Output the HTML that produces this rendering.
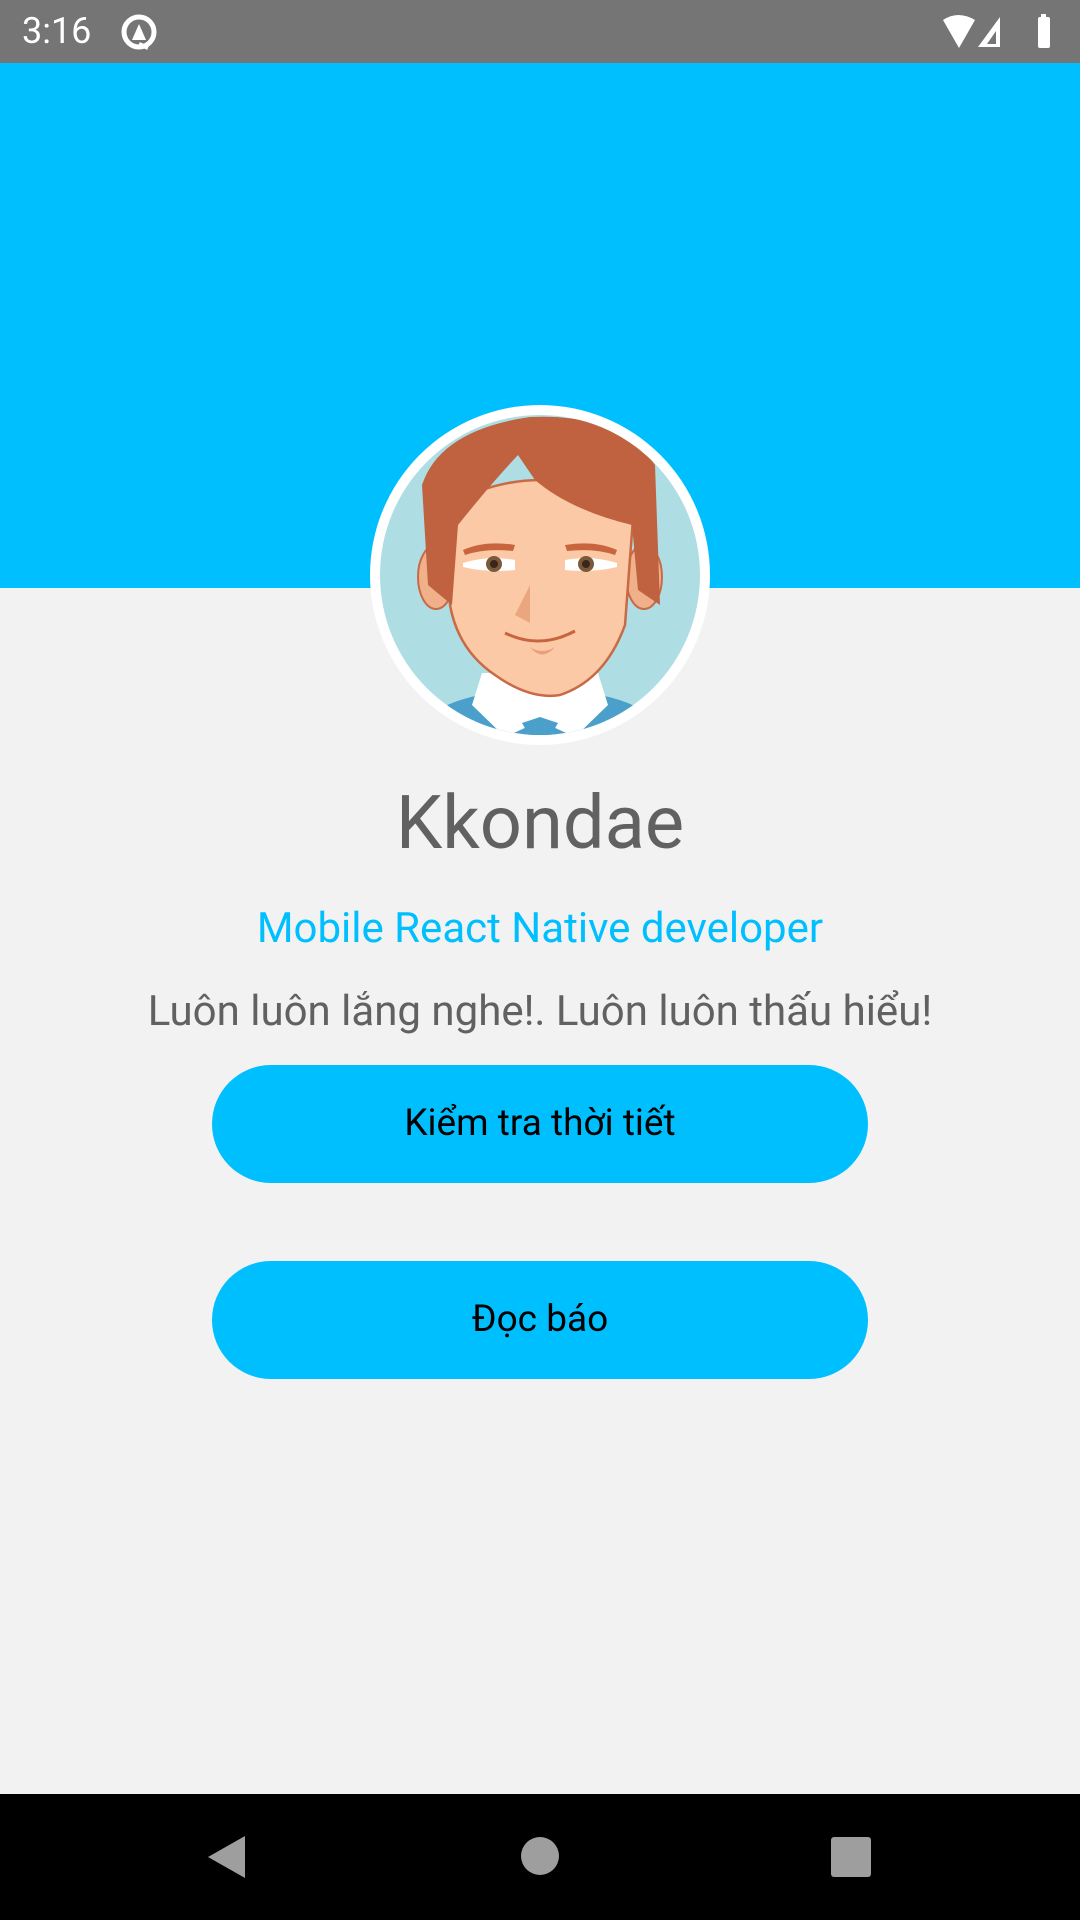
<!DOCTYPE html>
<html><head><meta charset="utf-8"><style>
*{margin:0;padding:0;box-sizing:border-box}
body{width:1080px;height:1920px;background:#f2f2f2;font-family:"Roboto","Liberation Sans","DejaVu Sans",sans-serif;position:relative;overflow:hidden}
.sb{position:absolute;left:0;top:0;width:1080px;height:63px;background:#757575;color:#fff}
.hdr{position:absolute;left:0;top:63px;width:1080px;height:525px;background:#00bfff}
.av{position:absolute;left:370px;top:405px;width:340px;height:340px}
.t{position:absolute;left:0;width:1080px;text-align:center}
.btn{position:absolute;left:212px;width:656px;height:118px;border-radius:59px;background:#00bfff;color:#000;font-size:37px;text-align:center;line-height:118px}
.nav{position:absolute;left:0;top:1794px;width:1080px;height:126px;background:#000}
</style></head><body>
<div class="sb">
<div style="position:absolute;left:22px;top:10px;font-size:36px">3:16</div>
<svg style="position:absolute;left:118px;top:12px" width="42" height="40" viewBox="0 0 42 40"><circle cx="21" cy="20" r="15" fill="none" stroke="#fff" stroke-width="5"/><path d="M14 28 L21 12 L28 28 Z" fill="#fff"/><path d="M21 32 L30 36" stroke="#fff" stroke-width="4"/></svg>
<svg style="position:absolute;left:940px;top:14px" width="125" height="36" viewBox="0 0 125 36"><path d="M3 6 Q18 -4 35 6 L19 34 Z" fill="#fff"/><path d="M38 33 L60 3 L60 33 Z" fill="#fff"/><path d="M47 30 L56 17 L56 30 Z" fill="#757575"/><rect x="101" y="0" width="5" height="4" fill="#fff"/><rect x="98" y="3" width="12" height="31" rx="2" fill="#fff"/></svg>
</div>
<div class="hdr"></div>
<svg class="av" viewBox="0 0 340 340">
<circle cx="170" cy="170" r="170" fill="#fff"/>
<clipPath id="c"><circle cx="170" cy="170" r="160"/></clipPath>
<g clip-path="url(#c)">
<rect width="340" height="340" fill="#aedde4"/>
<path d="M40 330 Q60 300 110 290 L230 290 Q280 300 300 330 L300 340 L40 340Z" fill="#4a9fcb"/>
<path d="M112 268 L228 268 L238 300 L205 332 L170 316 L135 332 L102 300Z" fill="#fff"/>
<path d="M152 318 L170 312 L188 318 L180 332 L160 332Z" fill="#4a9fcb"/>
<ellipse cx="66" cy="172" rx="18" ry="32" fill="#f0b08a" stroke="#c86a45" stroke-width="2"/>
<ellipse cx="274" cy="172" rx="18" ry="32" fill="#f0b08a" stroke="#c86a45" stroke-width="2"/>
<path d="M78 100 L80 200 Q88 245 125 270 Q160 295 190 290 Q235 275 255 220 L264 100 Q170 50 78 100Z" fill="#fbc9a5" stroke="#c86a45" stroke-width="2.5"/>
<path d="M52 80 Q70 25 160 12 Q250 8 285 60 L290 200 L268 185 L262 120 Q200 105 165 75 L148 50 Q120 80 88 120 L82 200 L58 180 Z" fill="#c0623f"/>
<path d="M93 145 Q115 135 145 140 L143 146 Q115 143 95 150Z" fill="#c8643e"/>
<path d="M195 140 Q225 135 247 145 L245 150 Q225 143 197 146Z" fill="#c8643e"/>
<path d="M93 158 Q118 150 145 155 L145 165 Q118 168 93 162Z" fill="#fff"/>
<path d="M195 155 Q222 150 247 158 L247 162 Q222 168 195 165Z" fill="#fff"/>
<circle cx="124" cy="159" r="8" fill="#7a5a3c"/><circle cx="124" cy="159" r="4" fill="#3a2618"/>
<circle cx="216" cy="159" r="8" fill="#7a5a3c"/><circle cx="216" cy="159" r="4" fill="#3a2618"/>
<path d="M160 180 L145 210 L160 218" fill="#eaa67f"/>
<path d="M135 228 Q170 245 205 226" fill="none" stroke="#c8643e" stroke-width="3"/>
<path d="M160 242 Q172 250 185 242 Q172 257 160 242Z" fill="#e8a07c"/>
</g>
</svg>
<div class="t" style="top:780px;font-size:74px;color:#616161">Kkondae</div>
<div class="t" style="top:904px;font-size:42px;color:#00bfff">Mobile React Native developer</div>
<div class="t" style="top:987px;font-size:42px;color:#616161">Luôn luôn lắng nghe!. Luôn luôn thấu hiểu!</div>
<div class="btn" style="top:1065px">Kiểm tra thời tiết</div>
<div class="btn" style="top:1261px">Đọc báo</div>
<div class="nav">
<svg style="position:absolute;left:205px;top:40px" width="42" height="46"><path d="M40 2 L40 44 L3 23Z" fill="#9e9e9e"/></svg>
<svg style="position:absolute;left:520px;top:42px" width="40" height="40"><circle cx="20" cy="20" r="19" fill="#9e9e9e"/></svg>
<svg style="position:absolute;left:831px;top:43px" width="40" height="40"><rect width="40" height="40" rx="3" fill="#9e9e9e"/></svg>
</div>
</body></html>
